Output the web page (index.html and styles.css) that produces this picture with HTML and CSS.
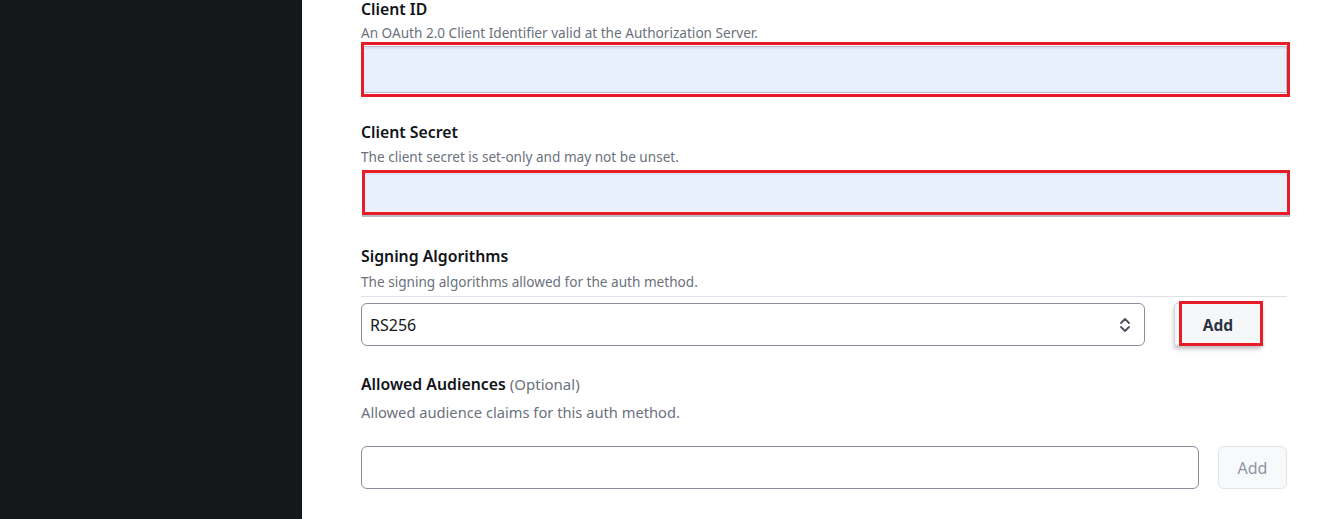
FILE: index.html
```html
<!DOCTYPE html>
<html>
<head>
<meta charset="utf-8">
<link rel="stylesheet" href="styles.css">
</head>
<body>
<div class="layout">
  <aside class="sidebar"></aside>
  <main class="main">
    <section class="field field-first">
      <div class="label">Client ID</div>
      <div class="desc">An OAuth 2.0 Client Identifier valid at the Authorization Server.</div>
      <div class="hl hl-id"><div class="autofill autofill-id"></div></div>
    </section>

    <section class="field field-secret">
      <div class="label">Client Secret</div>
      <div class="desc">The client secret is set-only and may not be unset.</div>
      <div class="hl hl-secret"></div>
    </section>

    <section class="field field-sign">
      <div class="label">Signing Algorithms</div>
      <div class="desc desc-rule">The signing algorithms allowed for the auth method.</div>
      <div class="row row-sign">
        <div class="select">
          <span>RS256</span>
          <svg class="chev" width="12" height="16" viewBox="0 0 12 16" fill="none" stroke="#4a4f5c" stroke-width="1.8" stroke-linecap="round" stroke-linejoin="round"><path d="M2 6 L6 2 L10 6"/><path d="M2 10 L6 14 L10 10"/></svg>
        </div>
        <button class="btn btn-add">Add</button>
      </div>
    </section>

    <section class="field field-aud">
      <div class="label">Allowed Audiences <span class="opt">(Optional)</span></div>
      <div class="desc desc-lg">Allowed audience claims for this auth method.</div>
      <div class="row row-aud">
        <div class="text-input"></div>
        <button class="btn btn-disabled">Add</button>
      </div>
    </section>
  </main>
</div>
</body>
</html>
```

FILE: styles.css
```css
* { box-sizing: border-box; }
html, body { margin: 0; padding: 0; background: #fff; }
body { font-family: "Noto Sans", "Open Sans", sans-serif; color: #15171c; overflow: hidden; height: 519px; }
.layout { display: flex; height: 519px; }
.sidebar { width: 302px; flex: none; background: #16171b; }
.main { flex: 1; padding: 0 34px 0 59px; display: flex; flex-direction: column; }

.field { display: flex; flex-direction: column; }
.label { font-size: 15.8px; font-weight: 600; line-height: 24px; height: 24px; color: #111318; white-space: nowrap; }
.opt { font-weight: 400; color: #6b717d; font-size: 15px; }
.desc { font-size: 13.6px; line-height: 18px; color: #6b717d; margin-top: 4px; white-space: nowrap; }
.desc-lg { font-size: 14.7px; line-height: 20px; }

.field-first { margin-top: -3px; }
.field-first .desc { margin-top: 3px; }
.hl { border: 3px solid #e81c27; }
.hl-id { margin-top: 0; height: 55px; width: 929px; padding: 1px 0 1px 0; }
.autofill { height: 100%; background: #e8f0fe; border: 1px solid #b9bdc9; border-left: none; border-top-color: #b6bac7; box-shadow: inset 0 2px 0 #dde4f3; }

.field-secret { margin-top: 23px; }
.hl-secret { margin-top: 4px; height: 45px; width: 928px; margin-left: 1px; background: #e8f0fe; box-shadow: inset 0 2px 0 #dde4f3, 0 2px 0 #b9bdc9; }

.field-sign { margin-top: 29px; }
.desc-rule { margin-top: 5px; padding-bottom: 5px; border-bottom: 1px solid #dde0e6; width: 926px; box-sizing: content-box; }
.row { display: flex; align-items: flex-start; }
.row-sign { margin-top: 6px; width: 926px; }
.select { width: 784px; height: 43px; border: 1px solid #8a8e9c; border-radius: 6px; display: flex; align-items: center; justify-content: space-between; padding: 0 13px 0 8px; font-size: 16px; color: #15171c; }
.chev { display: block; }
.btn { font-family: inherit; cursor: pointer; }
.btn-add { position: relative; margin-left: 29px; width: 88px; height: 43px; background: #f6f7f9; border: 1px solid #d5d8de; border-radius: 3px; box-shadow: 0 3px 4px rgba(0,0,0,0.25); font-size: 15.5px; font-weight: 700; color: #2d3340; padding: 0 0 0 0; }
.btn-add::after { content: ""; position: absolute; left: 4px; top: -3px; width: 84px; height: 45px; border: 3px solid #e81c27; box-sizing: border-box; }

.field-aud { margin-top: 26px; }
.field-aud .desc { margin-top: 6px; }
.row-aud { margin-top: 24px; width: 926px; }
.text-input { width: 838px; height: 43px; border: 1px solid #8a8e9c; border-radius: 6px; background: #fff; }
.btn-disabled { margin-left: 19px; width: 69px; height: 43px; background: #f8f9fa; border: 1px solid #e1e3e7; border-radius: 6px; font-size: 16px; color: #8d95a5; }
```
